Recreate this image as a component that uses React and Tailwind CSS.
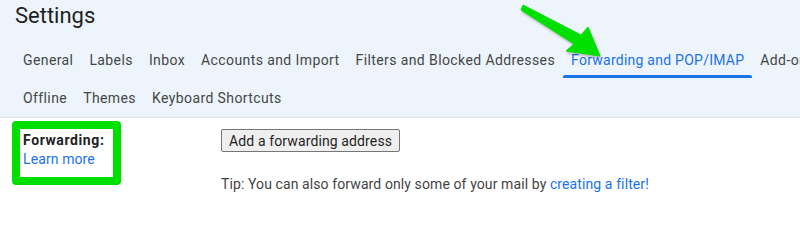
import React from "react";

const row1 = [
  "General",
  "Labels",
  "Inbox",
  "Accounts and Import",
  "Filters and Blocked Addresses",
  "Forwarding and POP/IMAP",
  "Add-ons",
];
const row2 = ["Offline", "Themes", "Keyboard Shortcuts"];

function Tab({ label, active }) {
  return (
    <div
      className={
        "relative flex items-center px-2 text-sm whitespace-nowrap " +
        (active ? "text-[#1a73e8] tracking-[0.25px]" : "text-[#444746] tracking-[0.4px]")
      }
    >
      {label}
      {active && (
        <div className="absolute left-0 right-0 bottom-[1px] h-[3px] rounded-t-[2px] bg-[#1a73e8]" />
      )}
    </div>
  );
}

export default function App() {
  return (
    <div className="relative w-[800px] h-[202px] overflow-hidden bg-white font-['Roboto',sans-serif]">
      <div className="bg-[#eef4fb] border-b border-[#dde3ea]">
        <div className="h-8 pl-[15px] text-[22px] leading-8 text-[#1f1f1f]">Settings</div>
        <div className="mt-2 flex h-[39px] pl-[15px]">
          {row1.map((t) => (
            <Tab key={t} label={t} active={t === "Forwarding and POP/IMAP"} />
          ))}
        </div>
        <div className="flex h-[38px] pl-[15px]">
          {row2.map((t) => (
            <Tab key={t} label={t} />
          ))}
        </div>
      </div>

      <div className="flex items-start pl-[23px] pt-[11px]">
        <div className="w-[198px] mt-[2px] text-sm leading-[19px]">
          <div className="font-bold tracking-[0.6px] text-[#222222]">Forwarding:</div>
          <div className="tracking-[0.1px] text-[#1a73e8]">Learn more</div>
        </div>
        <div className="flex flex-col items-start">
          <button className="h-[23px] px-[7px] border border-[#767676] bg-[#efefef] rounded-[2px] text-sm leading-none tracking-[0.12px] text-[#1f1f1f] font-['Roboto',sans-serif]">
            Add a forwarding address
          </button>
          <div className="mt-[22px] text-sm leading-5 tracking-[0.1px] text-[#444444] whitespace-nowrap">
            Tip: You can also forward only some of your mail by{" "}
            <span className="text-[#1a73e8]">creating a filter!</span>
          </div>
        </div>
      </div>

      <div className="absolute left-[12px] top-[121px] w-[109px] h-[64px] border-[8px] border-[#00e000] rounded-[4px]" />

      <svg
        className="absolute left-0 top-0 drop-shadow-[1px_2px_1px_rgba(0,0,0,0.25)]"
        width="800"
        height="202"
        viewBox="0 0 800 202"
      >
        <polygon
          points="523,5 581,35 588,27 600,56 566,51 574,44 521,10"
          fill="#00e000"
          strokeLinejoin="round"
          stroke="#00e000"
          strokeWidth="1"
        />
      </svg>
    </div>
  );
}
